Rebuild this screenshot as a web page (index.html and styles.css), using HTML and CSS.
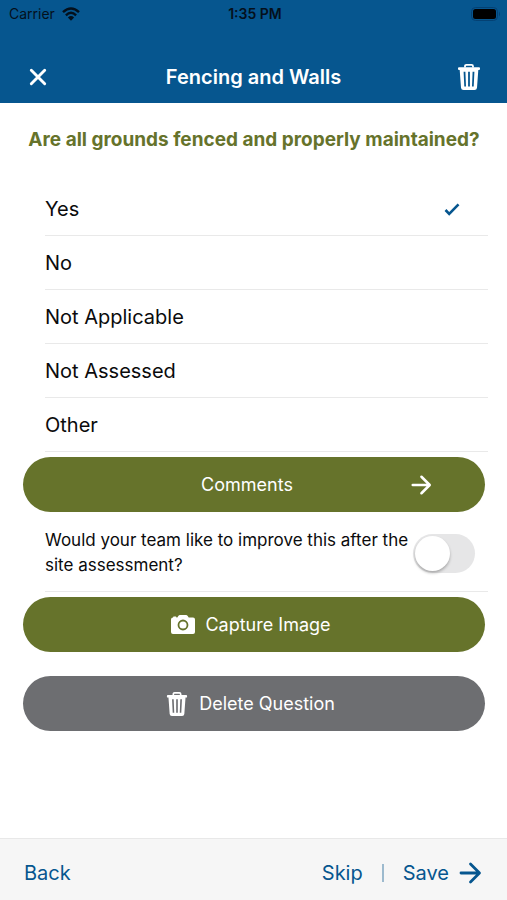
FILE: index.html
```html
<!DOCTYPE html>
<html lang="en">
<head>
<meta charset="utf-8">
<meta name="viewport" content="width=device-width, initial-scale=1">
<title>Fencing and Walls</title>
<link rel="stylesheet" href="styles.css">
</head>
<body>
<svg class="symbols" aria-hidden="true">
  <symbol id="trash" viewBox="0 0 24 28">
    <path d="M8 4.500V3.200Q8 1.800 9.400 1.800H14.600Q16 1.800 16 3.200V4.500" fill="none" stroke="currentColor" stroke-width="1.800"/>
    <path fill="currentColor" fill-rule="evenodd" d="M2 4.300H22a1 1 0 0 1 1 1V6a1 1 0 0 1-1 1H21.300L20 24.800Q19.800 27 17.500 27H6.500Q4.200 27 4 24.800L2.700 7H2a1 1 0 0 1-1-1V5.300a1 1 0 0 1 1-1ZM6.600 8.800 7.300 23.600H9L8.400 8.800ZM11.100 8.800V23.600H12.900V8.800ZM15.600 8.800 15 23.600H16.700L17.400 8.800Z"/>
  </symbol>
  <symbol id="arrow" viewBox="0 0 24 24">
    <path d="M3 12H21M12.500 3 21.500 12 12.500 21" fill="none" stroke="currentColor" stroke-width="2.800" stroke-linecap="round" stroke-linejoin="round"/>
  </symbol>
</svg>
<div class="screen">
  <header class="header">
    <div class="status">
      <span class="carrier">Carrier
        <svg width="18" height="14" viewBox="0 0 18 14" aria-hidden="true">
          <g fill="none" stroke="currentColor" stroke-width="2.400">
            <path d="M1 5.200Q9-2.400 17 5.200"/>
            <path d="M3.900 8.300Q9 3.400 14.100 8.300"/>
          </g>
          <path fill="currentColor" d="M5.900 10.400Q9 7.600 12.100 10.400L9 13.800Z"/>
        </svg>
      </span>
      <span class="clock">1:35 PM</span>
      <svg class="battery" width="30" height="14" viewBox="0 0 30 14" aria-hidden="true">
        <rect x=".5" y=".5" width="26" height="13" rx="4" fill="none" stroke="#044173"/>
        <rect x="2" y="2" width="23" height="10" rx="2.500" fill="#000"/>
        <path d="M28 4.500Q30 7 28 9.500Z" fill="#044173"/>
      </svg>
    </div>
    <div class="bar">
      <button class="icon-button" type="button" aria-label="Close">
        <svg width="18" height="18" viewBox="0 0 18 18"><path d="M2.300 2.300 15.700 15.700M15.700 2.300 2.300 15.700" stroke="currentColor" stroke-width="2.900" stroke-linecap="round"/></svg>
      </button>
      <h1 class="title">Fencing and Walls</h1>
      <button class="icon-button" type="button" aria-label="Delete">
        <svg width="24" height="28"><use href="#trash"/></svg>
      </button>
    </div>
  </header>

  <main class="content">
    <fieldset class="question">
      <legend class="prompt">Are all grounds fenced and properly maintained?</legend>
      <label class="option">Yes
        <input type="radio" name="answer" checked>
        <svg class="tick" width="16" height="14" viewBox="0 0 16 14" aria-hidden="true"><path d="M1.500 8 5.200 11.800 14.500 2.300" fill="none" stroke="currentColor" stroke-width="2.600"/></svg>
      </label>
      <label class="option">No <input type="radio" name="answer"></label>
      <label class="option">Not Applicable <input type="radio" name="answer"></label>
      <label class="option">Not Assessed <input type="radio" name="answer"></label>
      <label class="option">Other <input type="radio" name="answer"></label>
    </fieldset>
    <button class="pill comments" type="button">
      <span>Comments</span>
      <svg width="24" height="22"><use href="#arrow"/></svg>
    </button>
    <label class="improve">
      <span>Would your team like to improve this after the site assessment?</span>
      <input class="switch" type="checkbox" role="switch">
    </label>
    <button class="pill" type="button">
      <svg width="26" height="22" viewBox="0 0 26 22" aria-hidden="true"><path fill="currentColor" fill-rule="evenodd" d="M3 3.500 3.500 2.500H6L6.500 3.500H7.300L8.300 1.900Q8.900 1 10 1H16Q17.100 1 17.700 1.900L18.700 3.500H23Q25 3.500 25 5.500V18Q25 20 23 20H3Q1 20 1 18V5.500Q1 3.500 3 3.500ZM13 5.600A5.400 5.400 0 1 0 13 16.400 5.400 5.400 0 1 0 13 5.600ZM13 7.400A3.600 3.600 0 1 1 13 14.600 3.600 3.600 0 1 1 13 7.400Z"/></svg>
      Capture Image
    </button>
    <button class="pill delete" type="button">
      <svg width="22" height="26"><use href="#trash"/></svg>
      Delete Question
    </button>
  </main>

  <footer class="footer">
    <button class="link" type="button">Back</button>
    <div class="next">
      <button class="link" type="button">Skip</button>
      <span class="divider"></span>
      <button class="link" type="button">Save <svg width="24" height="24"><use href="#arrow"/></svg></button>
    </div>
  </footer>
</div>
</body>
</html>
```
FILE: styles.css
```css
* {
  box-sizing: border-box;
}

body {
  margin: 0;
  background: #fff;
  color: #0b0b0c;
  font-family: Inter, "Liberation Sans", sans-serif;
  font-size: 20px;
}

button {
  padding: 0;
  border: 0;
  background: none;
  color: inherit;
  font: inherit;
  cursor: pointer;
}

svg {
  display: block;
  flex: none;
}

.symbols {
  position: absolute;
  width: 0;
  height: 0;
}

.screen {
  display: flex;
  flex-direction: column;
  min-height: 100vh;
}

.header {
  background: #06568f;
}

.status {
  display: grid;
  grid-template-columns: 1fr auto 1fr;
  align-items: center;
  height: 27px;
  padding: 0 6px 0 9px;
  color: #04101c;
  font-size: 14px;
}

.carrier {
  display: flex;
  align-items: center;
  gap: 7px;
}

.clock {
  font-weight: 600;
}

.battery {
  justify-self: end;
}

.bar {
  display: grid;
  grid-template-columns: 32px 1fr 32px;
  align-items: center;
  height: 76px;
  padding: 24px 22px 0;
  color: #fff;
}

.icon-button {
  display: grid;
  place-items: center;
  height: 32px;
}

.title {
  margin: 0;
  font-size: 20px;
  font-weight: 600;
  text-align: center;
}

.content {
  flex: 1;
  padding: 0 22px 24px 23px;
}

.question {
  min-width: 0;
  margin: 0;
  padding: 0;
  border: 0;
}

.prompt {
  width: 100%;
  padding: 25px 0 30px;
  color: #66732b;
  font-size: 19px;
  font-weight: 700;
  line-height: 24px;
  text-align: center;
}

.option,
.improve {
  display: flex;
  align-items: center;
  justify-content: space-between;
  margin: 0 -3px 0 22px;
  border-bottom: 1px solid #e9e9e9;
}

.option {
  position: relative;
  height: 54px;
  padding-top: 1px;
}

.option input {
  position: absolute;
  inset: 0;
  margin: 0;
  appearance: none;
}

.tick {
  margin-right: 28px;
  color: #06568f;
}

.pill {
  display: flex;
  align-items: center;
  justify-content: center;
  gap: 9px;
  width: 100%;
  height: 55px;
  margin-top: 5px;
  padding-right: 7px;
  border-radius: 28px;
  background: #66732b;
  color: #fff;
  font-size: 18px;
}

.comments {
  display: grid;
  grid-template-columns: 1fr auto 1fr;
  gap: 0;
  padding-right: 14px;
}

.comments span {
  grid-column: 2;
}

.comments svg {
  justify-self: end;
  margin-right: 38px;
}

.improve {
  height: 80px;
  padding-right: 13px;
  padding-top: 3px;
  font-size: 17px;
  line-height: 25px;
}

.switch {
  flex: none;
  display: flex;
  width: 62px;
  height: 39px;
  margin: 0;
  padding: 2px;
  border-radius: 20px;
  background: #e6e6e7;
  appearance: none;
}

.switch::before {
  content: "";
  width: 35px;
  height: 35px;
  border-radius: 50%;
  background: #fff;
  box-shadow: 0 2px 3px #0004;
}

.switch:checked {
  justify-content: flex-end;
  background: #66732b;
}

.delete {
  margin-top: 24px;
  background: #6d6e71;
  gap: 11px;
}

.footer {
  display: flex;
  align-items: center;
  justify-content: space-between;
  height: 62px;
  padding: 6px 25px 0 24px;
  border-top: 1px solid #e8e8e8;
  background: #f6f6f6;
  color: #06568f;
}

.next,
.link {
  display: flex;
  align-items: center;
}

.next {
  gap: 19px;
}

.link {
  gap: 9px;
}

.divider {
  width: 2px;
  height: 18px;
  background: #9dbace;
}
```
